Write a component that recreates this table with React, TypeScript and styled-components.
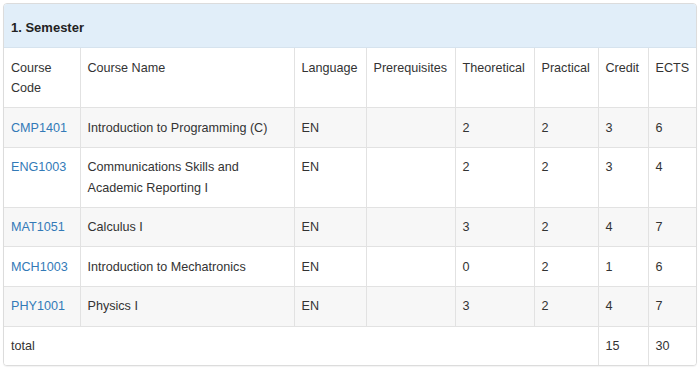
import React from "react";
import styled, { createGlobalStyle } from "styled-components";

const Global = createGlobalStyle`
  html, body { margin: 0; padding: 0; background: #fff; }
  body { font-family: "Liberation Sans", Arial, sans-serif; font-size: 12.6px; color: #333; }
`;

const Panel = styled.div`
  margin: 3px;
  width: 694px;
  box-sizing: border-box;
  border: 1px solid #dcdcdc;
  border-radius: 4px;
  overflow: hidden;
  background: #fff;
  box-shadow: 0 1px 1px rgba(0,0,0,0.05);
`;

const Heading = styled.div`
  height: 44px;
  box-sizing: border-box;
  display: flex;
  align-items: center;
  padding: 4px 7px 0;
  background: #e1eef9;
  border-bottom: 1px solid #d6e3ee;
  font-weight: bold;
  font-size: 13px;
  color: #222;
`;

const Table = styled.table`
  width: 100%;
  border-collapse: collapse;
  table-layout: fixed;
`;

const Cell = styled.td`
  padding: 9.5px 7px 8.6px 7px;
  line-height: 20.5px;
  vertical-align: top;
  text-align: left;
  font-weight: normal;
  border-left: 1px solid #e2e2e2;
  border-top: 1px solid #e2e2e2;
  &:first-child { border-left: none; }
`;

const Row = styled.tr<{ $striped?: boolean; $first?: boolean }>`
  background: ${(p) => (p.$striped ? "#f7f7f7" : "#fff")};
  ${(p) => (p.$first ? "td { border-top: none; }" : "")}
`;

const Link = styled.a`
  color: #337ab7;
  text-decoration: none;
`;

const cols = [76, 214, 72, 89, 79, 64, 50, 50];

const courses = [
  ["CMP1401", "Introduction to Programming (C)", "EN", "", "2", "2", "3", "6"],
  ["ENG1003", "Communications Skills and Academic Reporting I", "EN", "", "2", "2", "3", "4"],
  ["MAT1051", "Calculus I", "EN", "", "3", "2", "4", "7"],
  ["MCH1003", "Introduction to Mechatronics", "EN", "", "0", "2", "1", "6"],
  ["PHY1001", "Physics I", "EN", "", "3", "2", "4", "7"],
];

const headers = ["Course Code", "Course Name", "Language", "Prerequisites", "Theoretical", "Practical", "Credit", "ECTS"];

export default function App() {
  return (
    <>
      <Global />
      <Panel>
        <Heading>1. Semester</Heading>
        <Table>
          <colgroup>
            {cols.map((w, i) => (
              <col key={i} style={{ width: w }} />
            ))}
          </colgroup>
          <tbody>
            <Row $first>
              {headers.map((h) => (
                <Cell key={h}>{h}</Cell>
              ))}
            </Row>
            {courses.map((c, i) => (
              <Row key={c[0]} $striped={i % 2 === 0}>
                <Cell>
                  <Link href="#">{c[0]}</Link>
                </Cell>
                {c.slice(1).map((v, j) => (
                  <Cell key={j}>{v}</Cell>
                ))}
              </Row>
            ))}
            <Row>
              <Cell colSpan={6}>total</Cell>
              <Cell>15</Cell>
              <Cell>30</Cell>
            </Row>
          </tbody>
        </Table>
      </Panel>
    </>
  );
}
